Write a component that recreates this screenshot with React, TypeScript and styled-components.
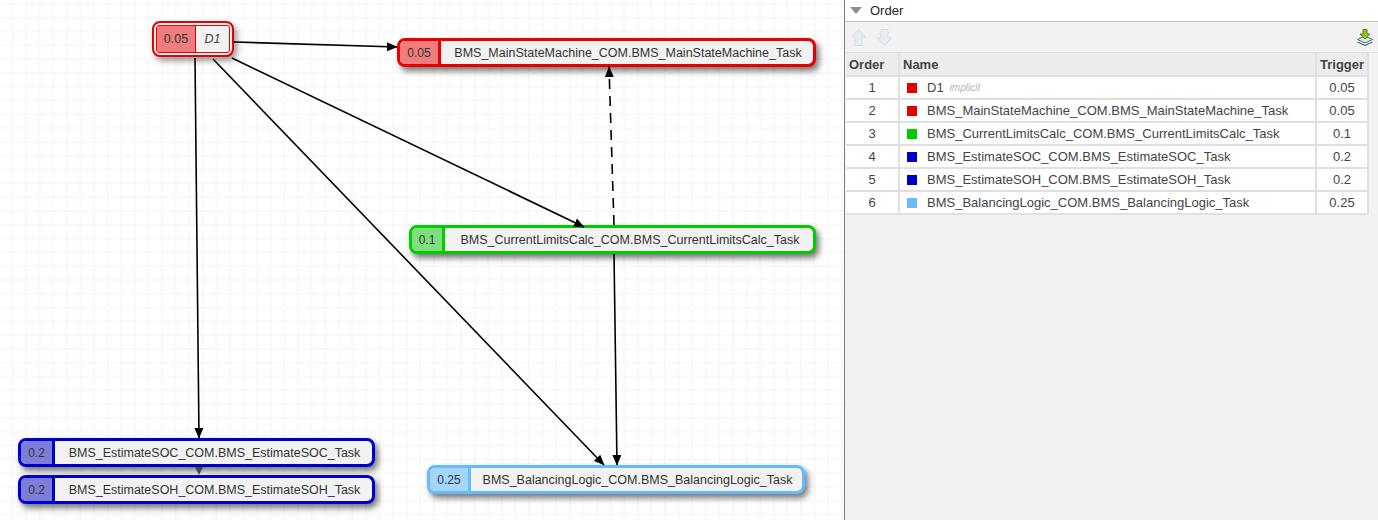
import styled, { createGlobalStyle } from "styled-components";

const GlobalStyle = createGlobalStyle`
  html, body {
    margin: 0;
    padding: 0;
    background: #fff;
    overflow: hidden;
  }
  body {
    font-family: "Liberation Sans", Arial, sans-serif;
    color: #333;
  }
`;

const Page = styled.div`
  width: 1378px;
  height: 520px;
  display: flex;
`;

const Canvas = styled.div`
  position: relative;
  width: 844px;
  height: 520px;
  flex: none;
  background-color: #fff;
  background-image: linear-gradient(#f9f9f9 2px, transparent 2px),
    linear-gradient(90deg, #f9f9f9 2px, transparent 2px);
  background-size: 13.6px 13.8px;
  background-position: 11.5px 3px;
`;

const Edges = styled.svg`
  position: absolute;
  inset: 0;
`;

const Node = styled.div<{ $color: string; $x: number; $y: number; $w: number; $h: number }>`
  position: absolute;
  left: ${({ $x }) => $x}px;
  top: ${({ $y }) => $y}px;
  width: ${({ $w }) => $w}px;
  height: ${({ $h }) => $h}px;
  box-sizing: border-box;
  display: flex;
  border: 3px solid ${({ $color }) => $color};
  border-radius: 8px;
  background: #f2f2f2;
  overflow: hidden;
  font-size: 12.5px;
  box-shadow: 3px 4px 6px rgba(0, 0, 0, 0.55);
`;

const Rate = styled.div<{ $color: string; $fill: string; $w: number }>`
  width: ${({ $w }) => $w}px;
  flex: none;
  display: flex;
  align-items: center;
  justify-content: center;
  background: ${({ $fill }) => $fill};
  border-right: 3px solid ${({ $color }) => $color};
  box-sizing: border-box;
  color: #333;
  font-size: 12px;
`;

const TaskName = styled.div`
  flex: 1;
  display: flex;
  align-items: center;
  justify-content: center;
  padding-left: 2px;
  color: #333;
  white-space: nowrap;
`;

const ImplicitOuter = styled.div`
  position: absolute;
  left: 152px;
  top: 21px;
  width: 82px;
  height: 36px;
  box-sizing: border-box;
  padding: 2px;
  border: 2px solid #e60000;
  border-radius: 8px;
  background: #f2f2f2;
  box-shadow: 3px 4px 6px rgba(0, 0, 0, 0.4);
`;

const ImplicitInner = styled.div`
  height: 100%;
  box-sizing: border-box;
  display: flex;
  border: 1px solid #e60000;
  border-radius: 3px;
  font-size: 12.5px;
  overflow: hidden;
`;

const ImplicitRate = styled.div`
  width: 39px;
  flex: none;
  box-sizing: border-box;
  display: flex;
  align-items: center;
  justify-content: center;
  background: #ef7d7d;
  border-right: 1px solid #e60000;
`;

const ImplicitName = styled.div`
  flex: 1;
  display: flex;
  align-items: center;
  justify-content: center;
  font-style: italic;
  color: #444;
`;

const Side = styled.div`
  flex: 1;
  display: flex;
  flex-direction: column;
  border-left: 1px solid #7f7f7f;
  background: #f2f2f2;
`;

const SectionTitle = styled.div`
  height: 22px;
  box-sizing: border-box;
  display: flex;
  align-items: center;
  gap: 8px;
  padding-left: 5px;
  background: #fff;
  border-bottom: 1px solid #c4c4c4;
  font-size: 13px;
  color: #222;
`;

const Caret = styled.span`
  width: 0;
  height: 0;
  border-left: 6px solid transparent;
  border-right: 6px solid transparent;
  border-top: 7px solid #8e8e8e;
`;

const Toolbar = styled.div`
  height: 31px;
  box-sizing: border-box;
  display: flex;
  align-items: center;
  padding: 0 5px 0 6px;
  gap: 11px;
  border-bottom: 1px solid #e0e0e0;
`;

const ToolIcon = styled.svg<{ $push?: boolean }>`
  display: block;
  margin-left: ${({ $push }) => ($push ? "auto" : "0")};
`;

const OrderTable = styled.table`
  width: 523px;
  margin-left: 1px;
  border-collapse: collapse;
  table-layout: fixed;
  font-size: 13px;
  color: #444;
`;

const HeadCell = styled.th<{ $w?: number }>`
  width: ${({ $w }) => ($w ? `${$w}px` : "auto")};
  height: 23px;
  box-sizing: border-box;
  padding: 0 3px;
  text-align: left;
  background: #ececec;
  border-right: 2px solid #e0e0e0;
  border-bottom: 2px solid #e0e0e0;
  font-size: 13px;
  color: #444;
  white-space: nowrap;
`;

const Row = styled.tr`
  height: 23px;
  background: #fff;
`;

const Cell = styled.td<{ $center?: boolean }>`
  box-sizing: border-box;
  padding: 0;
  text-align: ${({ $center }) => ($center ? "center" : "left")};
  border-right: 2px solid #e0e0e0;
  border-bottom: 2px solid #e0e0e0;
  white-space: nowrap;
`;

const NameWrap = styled.div`
  display: flex;
  align-items: center;
  padding-left: 7px;
`;

const Swatch = styled.span<{ $color: string }>`
  width: 10px;
  height: 10px;
  flex: none;
  margin-right: 10px;
  background: ${({ $color }) => $color};
`;

const Hint = styled.em`
  margin-left: 6px;
  font-size: 10px;
  color: #b5b5b5;
`;

const RED = "#e60000";
const GREEN = "#00cc00";
const BLUE = "#0000cc";
const SKY = "#66bbff";

const nodes = [
  { name: "BMS_MainStateMachine_COM.BMS_MainStateMachine_Task", rate: "0.05", color: RED, fill: "#ef7d7d", x: 397, y: 38, w: 419, h: 29, rw: 41 },
  { name: "BMS_CurrentLimitsCalc_COM.BMS_CurrentLimitsCalc_Task", rate: "0.1", color: GREEN, fill: "#7ddf7d", x: 409, y: 225, w: 407, h: 29, rw: 33 },
  { name: "BMS_EstimateSOC_COM.BMS_EstimateSOC_Task", rate: "0.2", color: BLUE, fill: "#7d7dd9", x: 18, y: 438, w: 357, h: 29, rw: 34 },
  { name: "BMS_EstimateSOH_COM.BMS_EstimateSOH_Task", rate: "0.2", color: BLUE, fill: "#7d7dd9", x: 18, y: 475, w: 357, h: 29, rw: 34 },
  { name: "BMS_BalancingLogic_COM.BMS_BalancingLogic_Task", rate: "0.25", color: SKY, fill: "#a5d6ff", x: 427, y: 465, w: 378, h: 29, rw: 41 },
];

const rows = [
  { name: "D1", trigger: "0.05", color: RED, implicit: true },
  { name: "BMS_MainStateMachine_COM.BMS_MainStateMachine_Task", trigger: "0.05", color: RED },
  { name: "BMS_CurrentLimitsCalc_COM.BMS_CurrentLimitsCalc_Task", trigger: "0.1", color: GREEN },
  { name: "BMS_EstimateSOC_COM.BMS_EstimateSOC_Task", trigger: "0.2", color: BLUE },
  { name: "BMS_EstimateSOH_COM.BMS_EstimateSOH_Task", trigger: "0.2", color: BLUE },
  { name: "BMS_BalancingLogic_COM.BMS_BalancingLogic_Task", trigger: "0.25", color: SKY },
];

const edges = [
  { d: "M234 42 L397 47" },
  { d: "M195 58 L199 438" },
  { d: "M213 59 L604 465" },
  { d: "M232 58 L584 227" },
  { d: "M614 225 L609 67", dash: "10 7" },
  { d: "M614 254 L617 465" },
];

const ArrowUp = () => (
  <ToolIcon width="15" height="17" viewBox="0 0 15 17">
    <path d="M7.5 0.5 L14.5 8 H11 V16.5 H4 V8 H0.5 Z" fill="#e6eef4" stroke="#cfdbe3" strokeWidth="1" />
  </ToolIcon>
);

const ArrowDown = () => (
  <ToolIcon width="15" height="17" viewBox="0 0 15 17">
    <path d="M4 0.5 H11 V9 H14.5 L7.5 16.5 L0.5 9 H4 Z" fill="#e6eef4" stroke="#cfdbe3" strokeWidth="1" />
  </ToolIcon>
);

const LayersDown = () => (
  <ToolIcon $push width="16" height="17" viewBox="0 0 16 17">
    <path d="M0.5 10.5 L8 7 L15.5 10.5 L8 14 Z" fill="#dfe7ea" stroke="#4f6a76" strokeWidth="1" />
    <path d="M0.5 13 L8 16.5 L15.5 13" fill="none" stroke="#4f6a76" strokeWidth="1.2" />
    <path d="M6 0.5 H10 V5 H13 L8 10 L3 5 H6 Z" fill="#9ac02c" stroke="#5f7d12" strokeWidth="1" />
  </ToolIcon>
);

export default function App() {
  return (
    <Page>
      <GlobalStyle />
      <Canvas>
        <ImplicitOuter>
          <ImplicitInner>
            <ImplicitRate>0.05</ImplicitRate>
            <ImplicitName>D1</ImplicitName>
          </ImplicitInner>
        </ImplicitOuter>
        {nodes.map((n) => (
          <Node key={n.name} $color={n.color} $x={n.x} $y={n.y} $w={n.w} $h={n.h}>
            <Rate $color={n.color} $fill={n.fill} $w={n.rw}>
              {n.rate}
            </Rate>
            <TaskName>{n.name}</TaskName>
          </Node>
        ))}
        <Edges width="844" height="520">
          <defs>
            <marker id="head" markerUnits="userSpaceOnUse" markerWidth="11" markerHeight="10" refX="10" refY="5" orient="auto">
              <path d="M0 0.5 L10.5 5 L0 9.5 Z" fill="#000" />
            </marker>
          </defs>
          {edges.map((e) => (
            <path
              key={e.d}
              d={e.d}
              fill="none"
              stroke="#000"
              strokeWidth="1.6"
              strokeDasharray={e.dash}
              markerEnd="url(#head)"
            />
          ))}
          <path d="M195 467 H203 L199 475 Z" fill="#444" />
        </Edges>
      </Canvas>
      <Side>
        <SectionTitle>
          <Caret />
          Order
        </SectionTitle>
        <Toolbar>
          <ArrowUp />
          <ArrowDown />
          <LayersDown />
        </Toolbar>
        <OrderTable>
          <thead>
            <tr>
              <HeadCell $w={53}>Order</HeadCell>
              <HeadCell>Name</HeadCell>
              <HeadCell $w={52}>Trigger</HeadCell>
            </tr>
          </thead>
          <tbody>
            {rows.map((r, i) => (
              <Row key={r.name}>
                <Cell $center>{i + 1}</Cell>
                <Cell>
                  <NameWrap>
                    <Swatch $color={r.color} />
                    {r.name}
                    {r.implicit && <Hint>implicit</Hint>}
                  </NameWrap>
                </Cell>
                <Cell $center>{r.trigger}</Cell>
              </Row>
            ))}
          </tbody>
        </OrderTable>
      </Side>
    </Page>
  );
}
